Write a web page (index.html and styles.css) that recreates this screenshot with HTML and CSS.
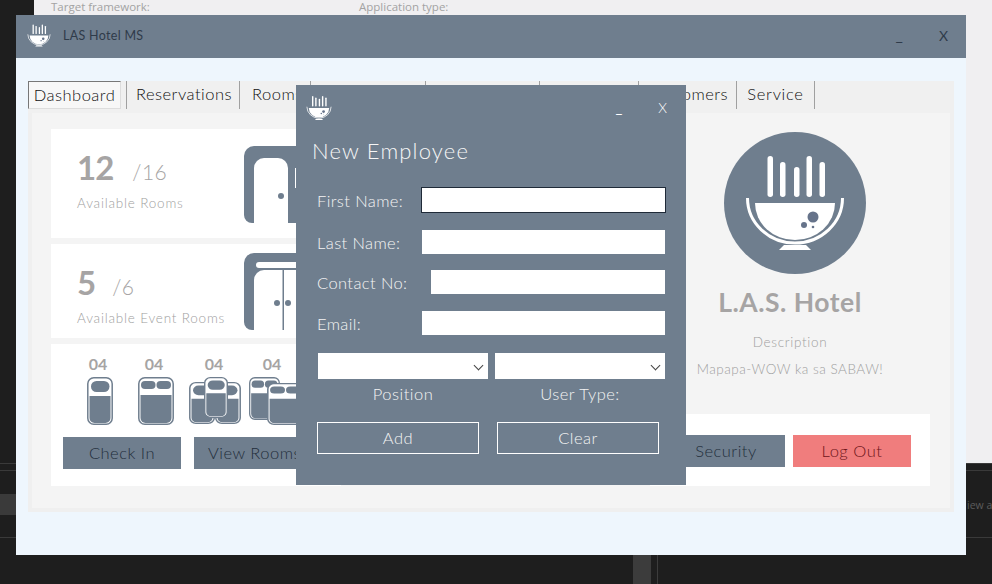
FILE: index.html
```html
<!DOCTYPE html>
<html lang="en">

<head>
    <meta charset="UTF-8">
    <title>LAS Hotel MS</title>
    <link rel="stylesheet" href="styles.css">
</head>

<body>
    <!-- shapes used more than once -->
    <svg class="defs" width="0" height="0">
        <symbol id="bowl" viewBox="20 22 102 98">
            <rect x="43.5" y="24" width="5.5" height="41" rx="2.7" fill="#fff" />
            <rect x="56" y="30" width="5.5" height="35" rx="2.7" fill="#fff" />
            <rect x="70" y="35" width="5.5" height="30" rx="2.7" fill="#fff" />
            <rect x="82.5" y="24" width="5.5" height="41" rx="2.7" fill="#fff" />
            <rect x="95.5" y="30" width="5.5" height="35" rx="2.7" fill="#fff" />
            <path d="M31 71H111A40 37 0 0 1 31 71Z" fill="#fff" />
            <path d="M23.500 66A47.500 45 0 0 0 118.500 66" fill="none" stroke="#fff" stroke-width="3" />
            <path d="M60 113H82L87 118H55Z" fill="#fff" />
            <circle cx="89" cy="85" r="5.500" fill="#66738a" />
            <circle cx="80" cy="93" r="3" fill="#66738a" />
            <circle cx="89" cy="95" r="1.300" fill="#66738a" />
        </symbol>
        <symbol id="bed-single" viewBox="0 0 26 48" preserveAspectRatio="none">
            <rect x="0.800" y="0.800" width="24.400" height="46.400" rx="6" fill="#fff" stroke="#6f7e8e" stroke-width="1.500" />
            <rect x="4" y="4" width="18.500" height="11" rx="5.500" fill="#6f7e8e" />
            <path d="M2.500 19H23.500V41A5 5 0 0 1 18.500 46H7.500A5 5 0 0 1 2.500 41Z" fill="#6f7e8e" />
        </symbol>
        <symbol id="bed-double" viewBox="0 0 36 48" preserveAspectRatio="none">
            <rect x="0.800" y="0.800" width="34.400" height="46.400" rx="6" fill="#fff" stroke="#6f7e8e" stroke-width="1.500" />
            <rect x="3" y="4" width="14.500" height="8" rx="4" fill="#6f7e8e" />
            <rect x="18.500" y="4" width="14.500" height="8" rx="4" fill="#6f7e8e" />
            <path d="M2.500 18H33.500V41A5 5 0 0 1 28.500 46H7.500A5 5 0 0 1 2.500 41Z" fill="#6f7e8e" />
        </symbol>
    </svg>

    <!-- what is behind the windows -->
    <div class="ide">
        <span class="ide-label ide-label-first">Target framework:</span>
        <span class="ide-label">Application type:</span>
    </div>
    <div class="strip strip-a"></div>
    <div class="strip strip-b"></div>
    <div class="strip strip-c"></div>
    <div class="strip-block"></div>
    <div class="strip-text">iew a</div>
    <div class="scroll-bar"></div>
    <div class="scroll-line"></div>

    <!-- main window -->
    <div class="window">
        <div class="title-bar">
            <svg class="title-logo">
                <use href="#bowl" />
            </svg>
            <span class="title-text">LAS Hotel MS</span>
            <span class="win-btn win-min">_</span>
            <span class="win-btn win-close">X</span>
        </div>

        <div class="window-body">
            <div class="tab-panel">
                <div class="tabs">
                    <div class="tab tab-active">Dashboard</div>
                    <div class="tab tab-res">Reservations</div>
                    <div class="tab tab-rooms">Rooms</div>
                    <div class="tab tab-blank-a"></div>
                    <div class="tab tab-blank-b"></div>
                    <div class="tab tab-blank-c"></div>
                    <div class="tab tab-cust">Customers</div>
                    <div class="tab tab-service">Service</div>
                </div>

                <div class="tab-content">
                    <div class="left-col">
                        <div class="card card-rooms">
                            <div class="stat">
                                <div class="stat-line"><b class="stat-num">12</b><span class="stat-total">/16</span></div>
                                <div class="stat-name">Available Rooms</div>
                            </div>
                            <svg class="room-icon" width="66" height="77" viewBox="0 0 66 77">
                                <path d="M10 0H66V77H8A8 8 0 0 1 0 69V10A10 10 0 0 1 10 0Z" fill="#6f7e8e" />
                                <path d="M10 77V22A10 10 0 0 1 20 12H34A10 10 0 0 1 44 22V77Z" fill="#fff" />
                                <circle cx="37" cy="50" r="3" fill="#6f7e8e" />
                                <rect x="51" y="22" width="2" height="20" fill="#fff" />
                            </svg>
                        </div>

                        <div class="card card-events">
                            <div class="stat">
                                <div class="stat-line"><b class="stat-num">5</b><span class="stat-total">/6</span></div>
                                <div class="stat-name">Available Event Rooms</div>
                            </div>
                            <svg class="room-icon" width="66" height="77" viewBox="0 0 66 77">
                                <path d="M10 0H66V77H8A8 8 0 0 1 0 69V10A10 10 0 0 1 10 0Z" fill="#6f7e8e" />
                                <rect x="12" y="9" width="54" height="6" rx="3" fill="#fff" />
                                <path d="M10 77V27A10 10 0 0 1 20 17H66V77Z" fill="#fff" />
                                <rect x="38.500" y="17" width="1.500" height="60" fill="#6f7e8e" />
                                <circle cx="33" cy="50" r="3" fill="#6f7e8e" />
                                <circle cx="44" cy="50" r="3" fill="#6f7e8e" />
                            </svg>
                        </div>

                        <div class="card card-beds">
                            <div class="bed-row">
                                <div class="bed-col">
                                    <span class="bed-count">04</span>
                                    <svg class="bed-pic bed-pic-a" width="26" height="48">
                                        <use href="#bed-single" width="26" height="48" />
                                    </svg>
                                </div>
                                <div class="bed-col">
                                    <span class="bed-count">04</span>
                                    <svg class="bed-pic bed-pic-b" width="36" height="48">
                                        <use href="#bed-double" width="36" height="48" />
                                    </svg>
                                </div>
                                <div class="bed-col">
                                    <span class="bed-count">04</span>
                                    <svg class="bed-pic bed-pic-c" width="52" height="48">
                                        <use href="#bed-single" x="0" y="5" width="26" height="42" />
                                        <use href="#bed-single" x="26" y="5" width="26" height="42" />
                                        <use href="#bed-single" x="15" y="0" width="24" height="41" />
                                    </svg>
                                </div>
                                <div class="bed-col">
                                    <span class="bed-count">04</span>
                                    <svg class="bed-pic" width="46" height="48">
                                        <use href="#bed-double" x="0" y="0" width="31" height="43" />
                                        <use href="#bed-double" x="18" y="6" width="37" height="42" />
                                    </svg>
                                </div>
                            </div>
                            <div class="btn-row">
                                <button class="btn">Check In</button>
                                <button class="btn">View Rooms</button>
                            </div>
                        </div>
                    </div>

                    <div class="right-col">
                        <svg class="big-logo" width="142" height="142" viewBox="0 0 142 142">
                            <circle cx="71" cy="71" r="71" fill="#6f7e8e" />
                            <use href="#bowl" x="20" y="22" width="102" height="98" />
                        </svg>
                        <h1 class="hotel-name">L.A.S. Hotel</h1>
                        <p class="hotel-text hotel-desc">Description</p>
                        <p class="hotel-text hotel-slogan">Mapapa-WOW ka sa SABAW!</p>
                        <div class="card card-actions">
                            <button class="btn">Security</button>
                            <button class="btn btn-red">Log Out</button>
                        </div>
                    </div>
                </div>
            </div>
        </div>
    </div>

    <!-- new employee dialog -->
    <div class="dialog">
        <div class="dialog-top">
            <svg class="dialog-logo">
                <use href="#bowl" />
            </svg>
            <span class="dialog-min">_</span>
            <span class="dialog-close">X</span>
        </div>
        <h2 class="dialog-title">New Employee</h2>

        <form class="form">
            <div class="form-row">
                <label class="form-label">First Name:</label>
                <input class="form-input form-input-focus" type="text">
            </div>
            <div class="form-row row-last">
                <label class="form-label">Last Name:</label>
                <input class="form-input" type="text">
            </div>
            <div class="form-row row-contact">
                <label class="form-label">Contact No:</label>
                <input class="form-input" type="text">
            </div>
            <div class="form-row row-email">
                <label class="form-label">Email:</label>
                <input class="form-input" type="text">
            </div>

            <div class="select-grid">
                <div class="select-box"><select class="select"></select></div>
                <div class="select-box"><select class="select"></select></div>
                <span class="select-label">Position</span>
                <span class="select-label">User Type:</span>
            </div>

            <div class="form-btns">
                <button class="ghost-btn" type="button">Add</button>
                <button class="ghost-btn" type="button">Clear</button>
            </div>
        </form>
    </div>
</body>

</html>
```

FILE: styles.css
```css
* {
    margin: 0;
    padding: 0;
    box-sizing: border-box;
}

body {
    width: 992px;
    height: 584px;
    position: relative;
    overflow: hidden;
    background-color: #1e1e1e;
    font-family: "Lato", "Open Sans", sans-serif;
    color: #2f3b4a;
}

.defs {
    position: absolute;
}

/* desktop behind the windows */
.ide {
    position: absolute;
    left: 34px;
    top: 0;
    right: 0;
    height: 463px;
    background-color: #f0eff1;
    display: flex;
    padding-left: 17px;
}

.ide-label {
    font-family: "Open Sans", sans-serif;
    font-size: 11.500px;
    line-height: 13px;
    color: #a3a3a3;
}

.ide-label-first {
    width: 308px;
}

.strip {
    position: absolute;
    left: 0;
    right: 0;
    height: 1px;
    background-color: #3a3a3a;
}

.strip-a {
    top: 463px;
}

.strip-b {
    top: 470px;
}

.strip-c {
    top: 537px;
}

.strip-block {
    position: absolute;
    left: 0;
    top: 494px;
    width: 16px;
    height: 21px;
    background-color: #3a3a3a;
}

.strip-text {
    position: absolute;
    left: 967px;
    top: 498px;
    font-family: "Open Sans", sans-serif;
    font-size: 10.500px;
    color: #5c5c5c;
    white-space: nowrap;
}

.scroll-bar {
    position: absolute;
    left: 633px;
    top: 555px;
    width: 18px;
    height: 29px;
    background-color: #3c3c3c;
}

.scroll-line {
    position: absolute;
    left: 657px;
    top: 555px;
    width: 1px;
    height: 29px;
    background-color: #3c3c3c;
}

/* main window */
.window {
    position: absolute;
    left: 16px;
    top: 15px;
    width: 950px;
    height: 540px;
    background-color: #eef6fd;
    display: flex;
    flex-direction: column;
}

.title-bar {
    height: 43px;
    flex-shrink: 0;
    background-color: #6f7e8e;
    display: flex;
    align-items: center;
    padding-left: 11px;
}

.title-logo {
    width: 24px;
    height: 23px;
    margin-bottom: 2px;
}

.title-text {
    margin-left: 12px;
    margin-bottom: 3px;
    font-size: 12.500px;
    letter-spacing: 0.300px;
    color: #2f3b4a;
}

.win-btn {
    font-size: 14px;
    color: #2f3b4a;
}

.win-min {
    margin-left: auto;
    margin-bottom: 5px;
    font-size: 16px;
}

.win-close {
    margin-left: 36px;
    margin-right: 18px;
    margin-bottom: 3px;
}

.window-body {
    flex: 1;
    padding: 23px 12px 43px 12px;
    display: flex;
}

.tab-panel {
    flex: 1;
    display: flex;
    flex-direction: column;
    background-color: #efefef;
    padding: 0 4px 4px 4px;
}

.tabs {
    height: 32px;
    flex-shrink: 0;
    display: flex;
    margin-left: -4px;
    background-color: #f0f0f0;
}

.tab {
    height: 28px;
    font-size: 16.500px;
    font-weight: 300;
    line-height: 27px;
    letter-spacing: 0.500px;
    color: #111;
    text-align: center;
    border-right: 1px solid #a0a0a0;
    white-space: nowrap;
}

.tab-active {
    width: 93px;
    margin-right: 5px;
    border: 1px solid #777;
    border-right-color: #ddd;
    border-bottom-color: #ddd;
    background-color: #f7f7f7;
}

.tab-res {
    width: 114px;
    border-left: 1px solid #a0a0a0;
    padding-left: 2px;
}

.tab-rooms {
    width: 71px;
    text-align: left;
    padding-left: 12px;
}

.tab-blank-a {
    width: 115px;
}

.tab-blank-b {
    width: 114px;
}

.tab-blank-c {
    width: 99px;
}

.tab-cust {
    width: 98px;
}

.tab-service {
    width: 78px;
    letter-spacing: 0.700px;
}

.tab-content {
    flex: 1;
    background-color: #f4f4f4;
    padding: 16px 20px 22px 19px;
    display: grid;
    grid-template-columns: 290px 280px;
    justify-content: space-between;
}

.left-col {
    display: flex;
    flex-direction: column;
    gap: 6px;
}

.card {
    background-color: #fff;
}

.card-rooms,
.card-events {
    display: flex;
    overflow: hidden;
}

.card-rooms {
    height: 109px;
    padding: 17px 0 0 26px;
}

.card-events {
    height: 94px;
    padding: 9px 0 0 26px;
}

.stat {
    width: 167px;
    padding-top: 1px;
}

.stat-line {
    display: flex;
    align-items: baseline;
    height: 40px;
}

.stat-num {
    font-size: 33px;
    line-height: 40px;
    letter-spacing: -1px;
    color: #a6a4a4;
}

.stat-total {
    margin-left: 19px;
    font-size: 21px;
    font-weight: 300;
    letter-spacing: 0.500px;
    color: #a6a4a4;
}

.stat-name {
    margin-top: 8px;
    font-size: 13.500px;
    font-weight: 300;
    letter-spacing: 0.800px;
    color: #a0a0a0;
}

.card-events .stat {
    padding-top: 9px;
}

.card-events .stat-total {
    margin-left: 17px;
}

.card-events .stat-name {
    margin-top: 8px;
}

.card-beds {
    height: 142px;
    display: flex;
    flex-direction: column;
    padding: 12px 0 0 12px;
}

.bed-row {
    display: grid;
    grid-template-columns: 56px 56px 64px 52px;
    margin-left: 7px;
    height: 81px;
}

.bed-col {
    display: flex;
    flex-direction: column;
    align-items: center;
}

.bed-count {
    font-size: 16px;
    line-height: 16px;
    height: 21px;
    font-weight: 700;
    color: #a6a4a4;
}

.bed-pic {
    overflow: visible;
}

.bed-pic-a {
    margin-left: 4px;
}

.bed-pic-b {
    margin-left: 3px;
}

.bed-pic-c {
    margin-left: 2px;
}

.btn-row {
    display: flex;
    gap: 13px;
}

.btn {
    width: 118px;
    height: 32px;
    border: none;
    background-color: #6f7e8e;
    font-family: inherit;
    font-size: 16.500px;
    font-weight: 300;
    letter-spacing: 0.500px;
    color: #232e3c;
    flex-shrink: 0;
}

.btn-row .btn:last-child {
    white-space: nowrap;
    text-align: left;
    padding-left: 14px;
}

.btn-red {
    background-color: #f07d7d;
    color: #6e151b;
}

.right-col {
    display: flex;
    flex-direction: column;
    align-items: center;
}

.big-logo {
    margin: 3px 0 0 10px;
    flex-shrink: 0;
}

.hotel-name {
    margin-top: 11px;
    font-size: 26.500px;
    line-height: 34px;
    font-weight: 700;
    letter-spacing: 0.500px;
    color: #a6a4a4;
}

.hotel-text {
    font-size: 13.500px;
    font-weight: 300;
    letter-spacing: 0.700px;
    color: #a0a0a0;
}

.hotel-desc {
    margin-top: 15px;
}

.hotel-slogan {
    margin-top: 11px;
    letter-spacing: 0.500px;
}

.card-actions {
    margin-top: auto;
    width: 100%;
    height: 72px;
    display: flex;
    justify-content: flex-end;
    gap: 8px;
    padding: 21px 19px 0 0;
}

/* dialog */
.dialog {
    position: absolute;
    left: 296px;
    top: 85px;
    width: 390px;
    height: 400px;
    background-color: #6f7e8e;
    color: #f4f4f4;
}

.dialog-top {
    display: flex;
    padding: 10px 19px 0 10px;
    height: 36px;
    color: #fff;
}

.dialog-logo {
    width: 26px;
    height: 26px;
}

.dialog-min {
    margin-left: auto;
    margin-top: 3px;
    font-size: 15px;
}

.dialog-close {
    margin-left: 36px;
    margin-top: 4px;
    font-size: 14px;
    font-weight: 300;
}

.dialog-title {
    margin: 16px 0 0 16px;
    font-size: 22px;
    line-height: 28px;
    font-weight: 300;
    letter-spacing: 1.200px;
    color: #f6f6f6;
}

.form {
    padding: 22px 21px 0 21px;
}

.form-row {
    display: flex;
    align-items: center;
    justify-content: space-between;
    height: 26px;
}

.row-last {
    margin-top: 16px;
}

.row-contact {
    margin-top: 14px;
}

.row-email {
    margin-top: 15px;
}

.form-label {
    padding-top: 2px;
    font-size: 16.500px;
    font-weight: 300;
    letter-spacing: 0.400px;
}

.form-input {
    width: 243px;
    height: 24px;
    border: none;
    background-color: #fff;
}

.form-input-focus {
    width: 245px;
    height: 26px;
    margin-right: -1px;
    border: 1px solid #1f2a38;
}

.row-contact .form-input {
    width: 234px;
}

.select-grid {
    margin-top: 17px;
    display: grid;
    grid-template-columns: 170px 170px;
    column-gap: 7px;
    margin-left: 1px;
}

.select-box {
    height: 26px;
    position: relative;
}

.select-box::after {
    content: "";
    position: absolute;
    right: 6px;
    top: 9px;
    width: 6px;
    height: 6px;
    border-right: 1px solid #444;
    border-bottom: 1px solid #444;
    transform: rotate(45deg);
}

.select {
    display: block;
    width: 100%;
    height: 26px;
    border: none;
    background-color: #fff;
    appearance: none;
}

.select-label {
    margin-top: 4px;
    font-size: 16.500px;
    font-weight: 300;
    line-height: 22px;
    letter-spacing: 0.500px;
    text-align: center;
}

.form-btns {
    margin-top: 17px;
    display: flex;
    gap: 18px;
}

.ghost-btn {
    width: 162px;
    height: 32px;
    border: 1px solid #fff;
    background: none;
    font-family: inherit;
    font-size: 16.500px;
    font-weight: 300;
    letter-spacing: 0.500px;
    color: #f4f4f4;
}
```
